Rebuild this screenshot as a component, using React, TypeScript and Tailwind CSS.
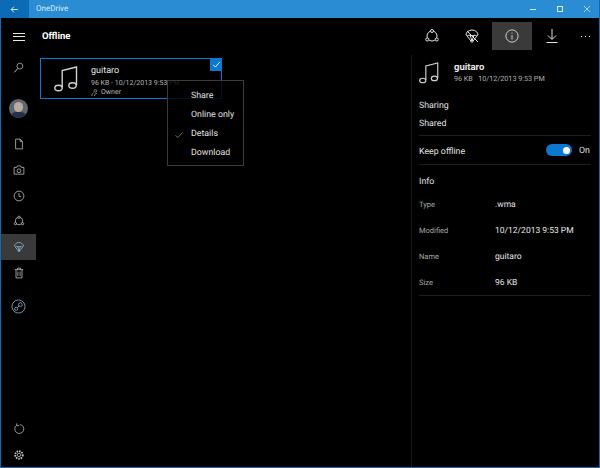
import React from "react";

const font = { fontFamily: 'Roboto, "Noto Sans", sans-serif' };

const Icon = ({ size = 14, children, className = "" }: { size?: number; children: React.ReactNode; className?: string }) => (
  <svg width={size} height={size} viewBox="0 0 16 16" fill="none" stroke="currentColor" strokeWidth="1" className={className}>
    {children}
  </svg>
);

const Note = ({ w, h }: { w: number; h: number }) => (
  <svg width={w} height={h} viewBox="0 0 24 26" fill="none" stroke="#d0d0d0" strokeWidth="1.4">
    <ellipse cx="4.5" cy="22" rx="3.7" ry="2.700" />
    <ellipse cx="18.500" cy="19.500" rx="3.700" ry="2.700" />
    <path d="M8.200 21.500V4.500L22.500 1v18" />
  </svg>
);

const Cycle = () => (
  <>
    <circle cx="8" cy="8" r="5" />
    <circle cx="8" cy="3" r="1.5" fill="#000" />
    <circle cx="3.2" cy="11.5" r="1.5" fill="#000" />
    <circle cx="12.8" cy="11.5" r="1.5" fill="#000" />
  </>
);

const Chute = () => (
  <>
    <path d="M2 7a6 5 0 0 1 12 0c-1 1-2 1-3 0-1 1-5 1-6 0-1 1-2 1-3 0z" />
    <path d="M3 8l4 5M13 8l-4 5M6 7l2 6M10 7l-2 6" />
    <circle cx="8" cy="13" r="1.2" />
  </>
);

function SideItem({ children, active = false, className = "h-[26px]" }: { children: React.ReactNode; active?: boolean; className?: string }) {
  return (
    <div className={`flex items-center justify-center ${active ? "bg-[#3a3a3a]" : ""} ${className}`}>
      {children}
    </div>
  );
}

function InfoRow({ label, value }: { label: string; value: string }) {
  return (
    <div className="h-[26px] pt-[2px] flex items-center">
      <span className="w-[76px] text-[7.500px] text-[#a8a8a8]">{label}</span>
      <span className="text-[8.500px] text-[#e8e8e8]">{value}</span>
    </div>
  );
}

export default function App() {
  return (
    <div style={font} className="w-[600px] h-[468px] bg-black flex flex-col overflow-hidden border-x border-b border-[#0b6cb5] relative [text-rendering:geometricPrecision]">
      {/* title bar */}
      <div className="h-[18px] bg-[#2a8dd4] flex items-center shrink-0 -mx-px">
        <div className="w-[29px] h-full bg-[#0b6cb5] flex items-center justify-center text-white">
          <Icon size={9} className="text-white">
            <path d="M14 8H2M7 3L2 8l5 5" strokeWidth="1.5" />
          </Icon>
        </div>
        <span className="ml-[7px] text-[8px] text-[#d8ecfa]">OneDrive</span>
        <div className="ml-auto flex items-center text-[#d8ecfa]">
          <div className="w-[27px] flex justify-center"><div className="w-[6px] h-px bg-[#d8ecfa]" /></div>
          <div className="w-[27px] flex justify-center"><div className="w-[6px] h-[6px] border border-[#d8ecfa]" /></div>
          <div className="w-[27px] flex justify-center">
            <Icon size={8}><path d="M2 2l12 12M14 2L2 14" strokeWidth="1.5" /></Icon>
          </div>
        </div>
      </div>

      <div className="flex-1 flex min-h-0">
        {/* sidebar */}
        <div className="w-[35px] flex flex-col text-[#c8c8c8]">
          <div className="h-[37px] flex items-center justify-center">
            <div className="w-[12px] h-[8px] border-y border-[#e8e8e8] flex items-center"><div className="w-full h-px bg-[#e8e8e8]" /></div>
          </div>
          <div className="h-[24px] flex items-center justify-center">
            <Icon size={11}><circle cx="10" cy="6" r="4.3" /><path d="M7 9.5L2 15" strokeWidth="1.4" /></Icon>
          </div>
          <div className="mt-[20px] h-[19px] flex justify-center">
            <div className="w-[19px] h-[19px] rounded-full bg-[#5f6670] overflow-hidden flex flex-col items-center">
              <div className="w-[9px] h-[10px] mt-[3px] rounded-full bg-[#b8aca0]" />
              <div className="w-[17px] h-[6px] rounded-t-full bg-[#26304a]" />
            </div>
          </div>
          <SideItem className="h-[26px] mt-[13px]">
            <Icon size={12}><path d="M3.5 1.5h6l3 3v10h-9zM9.5 1.5v3h3" /></Icon>
          </SideItem>
          <SideItem>
            <Icon size={12}><path d="M1.5 4.5h3.5l1-2h4l1 2h3.500v9h-13z" /><circle cx="8" cy="9" r="2.500" /></Icon>
          </SideItem>
          <SideItem className="h-[25px]">
            <Icon size={12}><circle cx="8" cy="8" r="6.500" /><path d="M8 4v4.500h3" /></Icon>
          </SideItem>
          <SideItem>
            <Icon size={12}><Cycle /></Icon>
          </SideItem>
          <SideItem active>
            <Icon size={12} className="text-[#8fb4d8]"><Chute /></Icon>
          </SideItem>
          <SideItem>
            <Icon size={12}><path d="M2.500 3.500h11M6 3.500v-2h4v2M4 3.500v11h8v-11M6.500 6v6M9.500 6v6" /></Icon>
          </SideItem>
          <div className="mt-[7px] h-[26px] flex items-center justify-center">
            <svg width="15" height="15" viewBox="0 0 16 16" fill="none" stroke="#8fa6c4" strokeWidth="0.9">
              <circle cx="8" cy="8" r="7" />
              <circle cx="5.500" cy="10.500" r="1.700" />
              <circle cx="10" cy="6" r="2" />
              <path d="M6.700 9.300l2-2" />
            </svg>
          </div>
          <div className="mt-auto">
            <SideItem className="h-[28px]">
              <Icon size={12}><path d="M5 3a6 6 0 1 0 4-1M5 0.500v3h3" /></Icon>
            </SideItem>
            <SideItem className="h-[24px]">
              <Icon size={12}><circle cx="8" cy="8" r="2.200" /><circle cx="8" cy="8" r="5" strokeWidth="2.400" strokeDasharray="2 1.300" /></Icon>
            </SideItem>
          </div>
        </div>

        {/* content + right panel */}
        <div className="flex-1 flex flex-col min-w-0">
          <div className="h-[37px] flex items-center shrink-0">
            <span className="ml-[6px] mt-[2px] text-[9.500px] font-bold text-white">Offline</span>
            <div className="ml-auto flex h-[28px] mt-[-1px] text-[#e4e4e4]">
              <div className="w-[40px] flex items-center justify-center"><Icon size={16}><Cycle /></Icon></div>
              <div className="w-[40px] flex items-center justify-center">
                <Icon size={16}><Chute /><path d="M3 3l11 11" /></Icon>
              </div>
              <div className="w-[40px] flex items-center justify-center bg-[#3a3a3a]">
                <Icon size={14}><circle cx="8" cy="8" r="7" /><path d="M8 4v1.200M8 7v5" /></Icon>
              </div>
              <div className="w-[40px] flex items-center justify-center">
                <Icon size={16}><path d="M8 1v10M4 7.500L8 11.500l4-4M2.500 14.500h11" /></Icon>
              </div>
              <div className="w-[27px] flex items-center justify-center gap-[3px]">
                <div className="w-px h-px bg-white" /><div className="w-px h-px bg-white" /><div className="w-px h-px bg-white" />
              </div>
            </div>
          </div>

          <div className="flex-1 flex min-h-0">
            {/* file area */}
            <div className="flex-1 pl-[4px] pt-[3px] relative">
              <div className="w-[182px] h-[41px] border border-[#0b79d0] flex items-center relative">
                <div className="w-[50px] flex justify-center"><Note w={24} h={26} /></div>
                <div className="flex flex-col pt-[4px]">
                  <span className="text-[9px] leading-[13px] text-[#e8e8e8]">guitaro</span>
                  <span className="text-[7px] leading-[10px] text-[#b8b8b8]">96 KB - 10/12/2013 9:53 PM</span>
                  <span className="text-[7px] leading-[9px] text-[#b8b8b8] flex items-center">
                    <svg width="7" height="7" viewBox="0 0 8 8" fill="none" stroke="#b0b0b0" strokeWidth="0.8" className="mr-[3px]">
                      <circle cx="5" cy="2" r="1.500" />
                      <path d="M1 8c0-2 1-3 2-4M4 8c0-2 1-3 3-3" />
                    </svg>
                    Owner
                  </span>
                </div>
                <div className="absolute top-[-1px] right-[-1px] w-[12px] h-[13px] bg-[#0b79d0] flex items-center justify-center">
                  <Icon size={9}><path d="M2 8.500l4 4 8-9" stroke="#fff" strokeWidth="1.600" /></Icon>
                </div>
              </div>
              {/* context menu */}
              <div className="absolute left-[131px] top-[25px] w-[77px] h-[86px] pt-[5px] bg-black/85 border border-[#3c3c3c] flex flex-col justify-center text-[8.800px] text-[#e0e0e0]">
                {["Share", "Online only", "Details", "Download"].map((item) => (
                  <div key={item} className="h-[19px] flex items-center pl-[23px] relative">
                    {item === "Details" && (
                      <Icon size={8} className="absolute left-[7px]"><path d="M1 8.500l4.500 4.500 9.500-10" /></Icon>
                    )}
                    {item}
                  </div>
                ))}
              </div>
            </div>

            {/* details panel */}
            <div className="w-[188px] border-l border-[#1a1a1a] pl-[7px] pr-[8px] flex flex-col">
              <div className="flex items-center h-[33px] mt-[1px]">
                <Note w={20} h={22} />
                <div className="ml-[15px] flex flex-col">
                  <span className="text-[9.500px] leading-[12px] font-bold text-[#e8e8e8]">guitaro</span>
                  <span className="text-[7.200px] leading-[10px] text-[#b0b0b0]">96 KB&nbsp;&nbsp;&nbsp;10/12/2013 9:53 PM</span>
                </div>
              </div>
              <div className="h-[19px] mt-[7px] pt-[2px] flex items-center text-[8.800px] text-[#e0e0e0]">Sharing</div>
              <div className="h-[19px] flex items-center text-[8.800px] text-[#e0e0e0]">Shared</div>
              <div className="h-[30px] mt-[1px] border-y border-[#1e1e1e] flex items-center text-[8.800px] text-[#e0e0e0]">
                <span className="pt-[6px]">Keep offline</span>
                <div className="ml-auto w-[26px] h-[12px] rounded-full bg-[#0b79d0] flex items-center justify-end pr-[2px]">
                  <div className="w-[7px] h-[7px] rounded-full bg-white" />
                </div>
                <span className="ml-[7px] w-[12px] pt-[3px]">On</span>
              </div>
              <div className="h-[26px] pt-[11px] flex items-start text-[8.800px] text-[#e0e0e0]">Info</div>
              <div className="border-b border-[#1e1e1e]">
                <InfoRow label="Type" value=".wma" />
                <InfoRow label="Modified" value="10/12/2013 9:53 PM" />
                <InfoRow label="Name" value="guitaro" />
                <InfoRow label="Size" value="96 KB" />
              </div>
            </div>
          </div>
        </div>
      </div>
    </div>
  );
}
